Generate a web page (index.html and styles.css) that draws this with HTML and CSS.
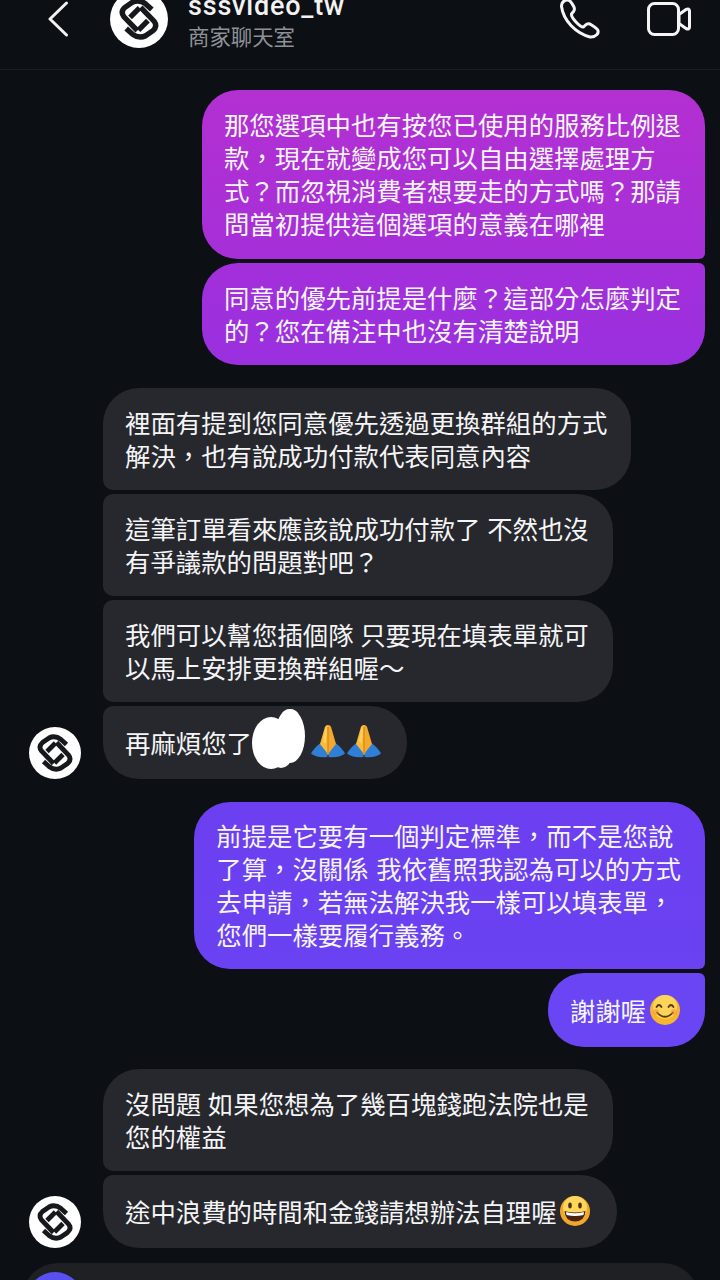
FILE: index.html
```html
<!DOCTYPE html>
<html lang="zh-Hant">
<head>
    <meta charset="UTF-8">
    <meta name="viewport" content="width=device-width, initial-scale=1.0">
    <title>sssvideo_tw</title>
    <link rel="stylesheet" href="styles.css">
</head>
<body>
    <svg class="defs" width="0" height="0">
        <symbol id="logo" viewBox="0 0 52 52">
            <circle cx="26" cy="26" r="26" fill="#fff"/>
            <g fill="none" stroke="#17181b" stroke-width="4.800">
                <path d="M37.500 17.500 L32 12.500 Q26 8 20 11 L13.500 15.500 Q9 19.500 12.500 24 L24.500 36.500"/>
                <path d="M14.500 34.500 L20 39.500 Q26 44 32 41 L38.500 36.500 Q43 32.500 39.500 28 L27.500 15.500"/>
                <path d="M18 24.500 L26.500 16"/>
                <path d="M34 27.500 L25.500 36"/>
            </g>
        </symbol>
        <symbol id="pray" viewBox="0 0 34 34">
            <path d="M0 29.500 Q3 24 9.500 19 L16 26 L16.500 33 Q5 34 0 29.500Z" fill="#2f7fd6"/>
            <path d="M34 29.500 Q31 24 24.500 19 L18 26 L17.500 33 Q29 34 34 29.500Z" fill="#2f7fd6"/>
            <path d="M17 1 Q14 1 13.500 4.500 L9 20 L15 27.500 L17 31Z" fill="#fbbb36"/>
            <path d="M17 1 Q20 1 20.500 4.500 L25 20 L19 27.500 L17 31Z" fill="#f4a82c"/>
            <path d="M17 3 L17 31" stroke="#dc8a1c" stroke-width="1.400"/>
            <path d="M14.500 3.500 Q16 2 16 7 L14.500 20 L12 17Z" fill="#fdd268"/>
        </symbol>
        <symbol id="smile" viewBox="0 0 30 30">
            <circle cx="15" cy="15" r="15" fill="#f7b52e"/>
            <circle cx="15" cy="12" r="12" fill="#fdd45a"/>
            <g fill="none" stroke="#5b3a10" stroke-width="1.800" stroke-linecap="round">
                <path d="M6.500 12 Q9 8 11.500 12"/>
                <path d="M18.500 12 Q21 8 23.500 12"/>
                <path d="M7 17.500 Q15 26 23 17.500"/>
            </g>
            <circle cx="6" cy="17" r="3" fill="#f58a3c" opacity=".5"/>
            <circle cx="24" cy="17" r="3" fill="#f58a3c" opacity=".5"/>
        </symbol>
        <symbol id="grin" viewBox="0 0 30 30">
            <circle cx="15" cy="15" r="15" fill="#f3a72a"/>
            <circle cx="15" cy="12" r="12" fill="#fcd75c"/>
            <ellipse cx="10" cy="9.500" rx="1.800" ry="3" fill="#4a2f10"/>
            <ellipse cx="20" cy="9.500" rx="1.800" ry="3" fill="#4a2f10"/>
            <path d="M4.500 15 Q15 18 25.500 15 Q25 25 15 25.500 Q5 25 4.500 15Z" fill="#4a2410"/>
            <path d="M6 16 Q15 18.500 24 16 L23.500 19 Q15 21 6.500 19Z" fill="#fff"/>
        </symbol>
    </svg>

    <div class="page">
        <header class="topbar">
            <svg class="back" viewBox="0 0 22 36" width="22" height="36">
                <path d="M19.500 2 L3 18 L19.500 34" fill="none" stroke="#f2f2f2" stroke-width="3" stroke-linecap="round" stroke-linejoin="round"/>
            </svg>
            <svg class="avatar-top" width="58" height="58"><use href="#logo"/></svg>
            <div class="who">
                <div class="who-name">sssvideo_tw</div>
                <div class="who-sub">商家聊天室</div>
            </div>
            <div class="actions">
                <svg viewBox="0 0 40 40" width="40" height="40">
                    <path d="M5 1.500 Q1.500 3 1.500 7.500 Q3 18 11 26.500 Q19 35 30 38 Q34 38.500 37 35.500 Q39 33 37.500 30.500 Q35 28 30 25 Q27.500 24 25.500 26 L23.500 28 Q21 28.500 15.500 22.500 Q11 17.500 11.500 15 L13.500 12.500 Q15 10.500 14 8 Q12 4 9.500 1.500 Q7 0.500 5 1.500Z" fill="none" stroke="#f4f4f4" stroke-width="3" stroke-linejoin="round"/>
                </svg>
                <svg viewBox="0 0 44 34" width="44" height="34">
                    <rect x="1.500" y="1.500" width="30" height="31" rx="6" fill="none" stroke="#f4f4f4" stroke-width="3"/>
                    <path d="M32 12.500 L39 7.500 Q42.500 6 42.500 9 L42.500 25 Q42.500 28 39 26.500 L32 21.500Z" fill="none" stroke="#f4f4f4" stroke-width="3" stroke-linejoin="round"/>
                </svg>
            </div>
        </header>

        <main class="thread">
            <section class="group group-out">
                <div class="bubble out first violet-a roomy">那您選項中也有按您已使用的服務比例退<br>款，現在就變成您可以自由選擇處理方<br>式？而忽視消費者想要走的方式嗎？那請<br>問當初提供這個選項的意義在哪裡</div>
                <div class="bubble out last violet-b">同意的優先前提是什麼？這部分怎麼判定<br>的？您在備注中也沒有清楚說明</div>
            </section>

            <section class="group group-in">
                <div class="stack">
                    <div class="bubble in first">裡面有提到您同意優先透過更換群組的方式<br>解決，也有說成功付款代表同意內容</div>
                    <div class="bubble in">這筆訂單看來應該說成功付款了 不然也沒<br>有爭議款的問題對吧？</div>
                    <div class="bubble in">我們可以幫您插個隊 只要現在填表單就可<br>以馬上安排更換群組喔～</div>
                    <div class="bubble in last single">再麻煩您了<svg class="blob" viewBox="0 0 53 60" width="53" height="60"><ellipse cx="19" cy="34" rx="19" ry="26" fill="#fff"/><ellipse cx="38" cy="27" rx="15" ry="27" fill="#fff"/><circle cx="38" cy="10" r="10" fill="#fff"/><circle cx="29" cy="49" r="10" fill="#fff"/></svg><svg class="emoji pray" width="34" height="34"><use href="#pray"/></svg><svg class="emoji pray" width="34" height="34"><use href="#pray"/></svg></div>
                </div>
                <svg class="avatar" width="52" height="52"><use href="#logo"/></svg>
            </section>

            <section class="group group-out">
                <div class="bubble out first indigo-a tall">前提是它要有一個判定標準，而不是您說<br>了算，沒關係 我依舊照我認為可以的方式<br>去申請，若無法解決我一樣可以填表單，<br>您們一樣要履行義務。</div>
                <div class="bubble out last indigo-b single thanks">謝謝喔<svg class="emoji smile" width="30" height="30"><use href="#smile"/></svg></div>
            </section>

            <section class="group group-in last-group">
                <div class="stack">
                    <div class="bubble in first">沒問題 如果您想為了幾百塊錢跑法院也是<br>您的權益</div>
                    <div class="bubble in last single">途中浪費的時間和金錢請想辦法自理喔<svg class="emoji grin" width="30" height="30"><use href="#grin"/></svg></div>
                </div>
                <svg class="avatar" width="52" height="52"><use href="#logo"/></svg>
            </section>
        </main>

        <footer class="composer">
            <span class="camera"></span>
        </footer>
    </div>
</body>
</html>
```

FILE: styles.css
```css
html, body {
    margin: 0;
    height: 100%;
}
body {
    background-color: #0c0f14;
    color: #f5f5f7;
    font-family: "Noto Sans CJK TC", "Noto Sans", sans-serif;
}
.defs {
    display: block;
    height: 0;
}
.page {
    height: 1280px;
    overflow: hidden;
}

/* top bar, its content is cut off by the top of the screen */
.topbar {
    box-sizing: border-box;
    height: 70px;
    padding: 0 29px 32px 47px;
    display: flex;
    align-items: center;
    border-bottom: 1px solid #1b1d22;
}
.back {
    flex: none;
}
.avatar-top {
    flex: none;
    margin-left: 41px;
}
.who {
    margin: 5px 0 0 20px;
}
.who-name {
    font-family: Roboto, sans-serif;
    font-size: 27px;
    font-weight: 500;
    line-height: 30px;
    letter-spacing: 0.8px;
    color: #f2f2f2;
}
.who-sub {
    font-size: 21.4px;
    line-height: 30px;
    color: #8f9196;
}
.actions {
    margin-left: auto;
    display: flex;
    align-items: center;
    gap: 47px;
}

/* messages */
.thread {
    padding-top: 20px;
    display: flex;
    flex-direction: column;
    gap: 23px;
}
.group {
    display: flex;
    flex-direction: column;
    gap: 4px;
}
.group-out {
    align-items: flex-end;
    padding-right: 15px;
}
.group-in {
    flex-direction: row-reverse;
    justify-content: flex-end;
    align-items: flex-end;
    gap: 22px;
    padding-left: 29px;
}
.last-group {
    margin-top: -1px;
}
.stack {
    display: flex;
    flex-direction: column;
    align-items: flex-start;
    gap: 4px;
}
.avatar {
    flex: none;
}
.bubble {
    padding: 18px 24px 18px 22px;
    font-size: 25.4px;
    line-height: 33px;
    white-space: nowrap;
    word-spacing: 1px;
}
.bubble.roomy {
    padding-bottom: 19px;
}
.bubble.tall {
    padding-top: 17px;
    padding-bottom: 18px;
    word-spacing: 2px;
}
.bubble.single {
    box-sizing: border-box;
    height: 73px;
    padding-top: 0;
    padding-bottom: 0;
    display: flex;
    align-items: center;
}
.bubble.thanks {
    height: 74px;
    padding-right: 25px;
}
.bubble.in {
    background-color: #26282d;
    border-radius: 10px 36px 36px 10px;
}
.bubble.in.first {
    border-top-left-radius: 36px;
}
.bubble.in.last {
    border-bottom-left-radius: 36px;
}
.bubble.out.first {
    border-radius: 36px 36px 6px 36px;
}
.bubble.out.last {
    border-radius: 36px 6px 36px 36px;
}
.violet-a {
    background: linear-gradient(#b330d2, #a62fd8);
}
.violet-b {
    background: linear-gradient(#a32fda, #9a30e0);
}
.indigo-a {
    background: linear-gradient(#6c3ff0, #6a42f2);
}
.indigo-b {
    background-color: #6a45f3;
}
.emoji {
    flex: none;
}
.emoji.pray {
    margin: -12px 2px -8px 0;
}
.emoji.smile {
    margin-left: 4px;
}
.emoji.grin {
    margin: -2px 3px 0 3px;
}
.blob {
    flex: none;
    margin: -18px 6px -10px 0;
}

/* message box, mostly below the screen */
.composer {
    box-sizing: border-box;
    height: 80px;
    margin: 15px 21px 0 22px;
    padding: 9px 0 0 5px;
    background-color: #1e2023;
    border-radius: 36px 36px 0 0;
}
.camera {
    display: block;
    width: 56px;
    height: 56px;
    border-radius: 50%;
    background-color: #5a50f2;
}
```
